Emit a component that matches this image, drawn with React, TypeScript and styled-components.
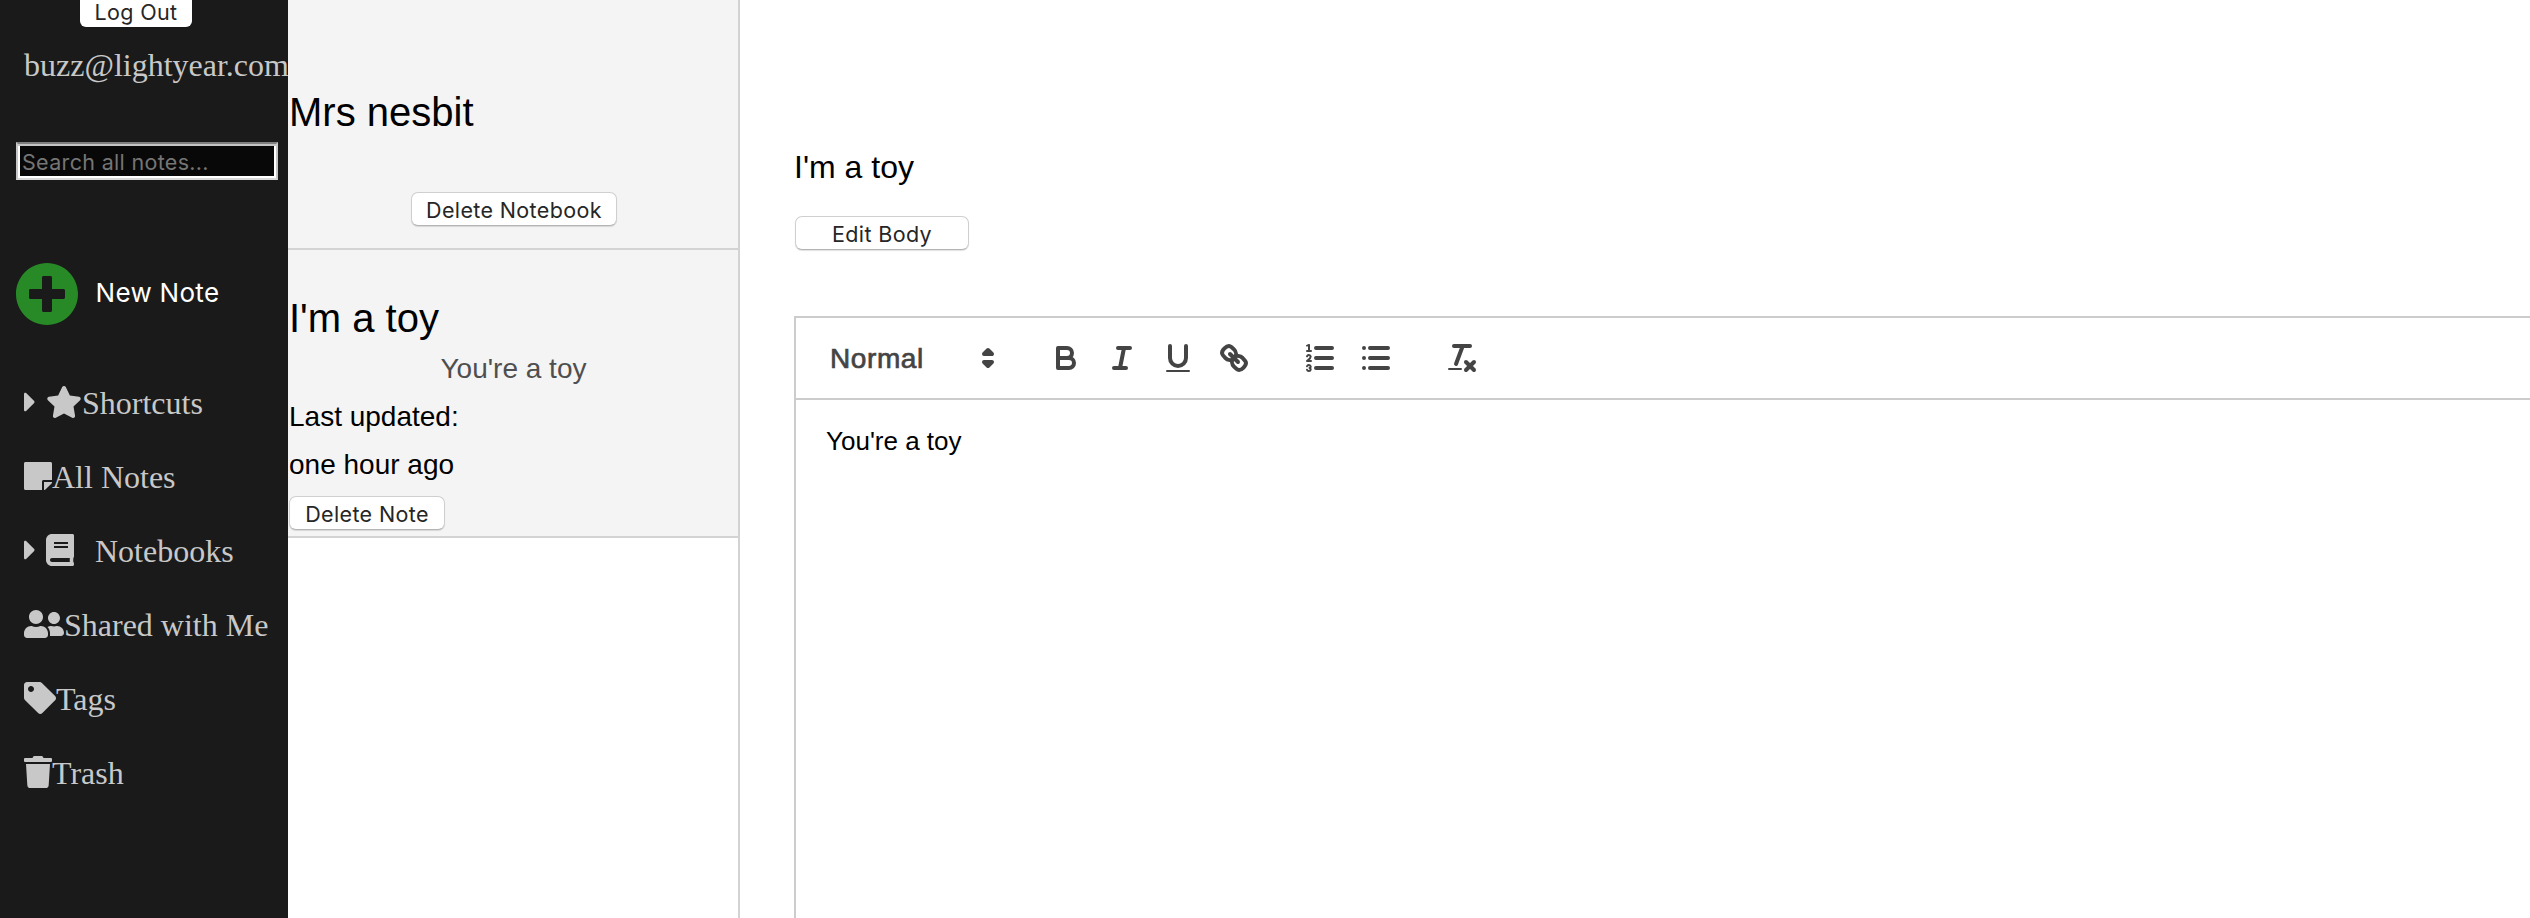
import React from 'react';
import styled, { createGlobalStyle } from 'styled-components';
import {
  FaBook,
  FaCaretRight,
  FaPlusCircle,
  FaStar,
  FaStickyNote,
  FaTag,
  FaTrash,
  FaUserFriends,
} from 'react-icons/fa';

const sans = "'Liberation Sans', Arial, Helvetica, sans-serif";
const serif = "'Liberation Serif', 'Times New Roman', serif";
const system = "Inter, 'Liberation Sans', sans-serif";

const GlobalStyle = createGlobalStyle`
  *, *::before, *::after { box-sizing: border-box; }
  body { margin: 0; background: #fff; overflow: hidden; }
  h1, h2, p { margin: 0; font-weight: 400; }
`;

const Page = styled.div`
  display: flex;
  width: 100%;
  height: 100vh;
  overflow: hidden;
  font-family: ${sans};
  color: #000;
`;

const Sidebar = styled.aside`
  display: flex;
  flex-direction: column;
  flex: 0 0 288px;
  overflow: hidden;
  background: #1a1a1a;
  color: #c8c8c8;
  font: 32px/37px ${serif};
`;

const Button = styled.button<{ $width: number }>`
  width: ${({ $width }) => $width}px;
  height: 34px;
  flex-shrink: 0;
  padding: 2px 0 0;
  border: 1px solid #cfcfcf;
  border-bottom-color: #b4b4b4;
  border-radius: 7px;
  background: #fff;
  box-shadow: 0 1px 1px rgba(0, 0, 0, 0.12);
  color: #262626;
  font: 21.5px/30px ${system};
  letter-spacing: 0.36px;
  white-space: nowrap;
`;

const LogOut = styled(Button)`
  height: 27px;
  margin-left: 80px;
  padding: 0 0 2px;
  border: 0;
  border-radius: 0 0 6px 6px;
  line-height: 23px;
`;

const Email = styled.p`
  margin: 20px 0 0 24px;
  height: 37px;
  white-space: nowrap;
`;

const Search = styled.input`
  width: 262px;
  height: 38px;
  margin: 58px 0 0 16px;
  padding: 2px 4px 0;
  border: 2px solid #c6c6c6;
  border-top-color: #7f7f7f;
  border-bottom-color: #d8d8d8;
  border-radius: 0;
  outline: 0;
  background: #080808;
  box-shadow: inset 0 2px 0 #c4c4c4, inset 0 0 0 2px #fff;
  color: #fff;
  font: 21.5px/30px ${system};
  letter-spacing: 0.32px;
  &::placeholder { color: #757575; opacity: 1; }
`;

const NewNote = styled.div`
  display: flex;
  align-items: center;
  height: 64px;
  margin: 82px 0 59px 15px;
  color: #fff;
  font: 26px/32px ${system};
  letter-spacing: 0.3px;
  svg { color: #278a27; margin-right: 16.5px; }
`;

const NewNoteLabel = styled.span`
  padding-bottom: 2px;
`;

const NavRow = styled.div`
  display: flex;
  align-items: flex-start;
  height: 32px;
  margin: 0 0 42px 24px;
  white-space: nowrap;
`;

const NavIcon = styled.span<{ $width: number; $gap?: number }>`
  display: flex;
  flex: none;
  width: ${({ $width }) => $width}px;
  height: 32px;
  margin: 1px ${({ $gap = 0 }) => $gap}px 0 0;
  svg { width: 100%; height: 100%; }
`;

const ListColumn = styled.section`
  flex: 0 0 452px;
  border-right: 2px solid #d3d3d3;
`;

const NotebookHeader = styled.header`
  display: flex;
  flex-direction: column;
  height: 250px;
  padding-top: 89px;
  background: #f4f4f4;
  border-bottom: 2px solid #d3d3d3;
  ${Button} { margin: 57px 0 0 123px; }
`;

const Heading = styled.h2`
  padding-left: 1px;
  font-size: 40px;
  line-height: 46px;
`;

const NoteCard = styled.article`
  height: 288px;
  padding-top: 45px;
  background: #f4f4f4;
  border-bottom: 2px solid #d3d3d3;
  font-size: 28px;
  line-height: 48px;
  ${Button} { display: block; margin: 7px 0 0 1px; }
`;

const Preview = styled.p`
  height: 52px;
  padding-left: 1px;
  line-height: 56px;
  text-align: center;
  color: #4f4f4f;
`;

const Updated = styled.p`
  padding-left: 1px;
`;

const Editor = styled.main`
  display: flex;
  flex-direction: column;
  flex: 1;
  min-width: 0;
  padding: 149px 0 0 54px;
`;

const Title = styled.h1`
  margin-bottom: 30px;
  font-size: 32px;
  line-height: 37px;
`;

const EditButton = styled(Button)`
  margin-left: 1px;
`;

const Toolbar = styled.div`
  display: flex;
  align-items: center;
  height: 84px;
  margin-top: 66px;
  padding: 0 16px;
  border: 2px solid #ccc;
  border-right: 0;
`;

const Group = styled.div`
  display: flex;
  margin-right: 30px;
`;

const Tool = styled.button`
  display: flex;
  width: 56px;
  height: 48px;
  padding: 6px 10px;
  border: 0;
  background: none;
`;

const Picker = styled.div`
  display: flex;
  align-items: center;
  justify-content: space-between;
  width: 196px;
  height: 48px;
  padding: 0 2px 0 18px;
  color: #444;
  font-size: 28px;
  letter-spacing: 0.6px;
  -webkit-text-stroke: 0.7px #444;
`;

const PickerLabel = styled.span`
  padding-top: 1px;
`;

const Body = styled.div`
  flex: 1;
  padding: 23px 30px;
  border-left: 2px solid #ccc;
  font-size: 26px;
  line-height: 37px;
`;

const Glyph = styled.svg`
  width: 36px;
  height: 36px;
  fill: none;
  stroke: #444;
  stroke-width: 2;
  stroke-linecap: round;
  stroke-linejoin: round;
  .fill { fill: #444; stroke: none; }
  .solid { fill: #444; }
  .thin { stroke-width: 1; }
`;

const Icon = ({ children }: { children: React.ReactNode }) => (
  <Glyph viewBox="0 0 18 18" aria-hidden="true">{children}</Glyph>
);

const BoldIcon = () => (
  <Icon>
    <path d="M5,4H9.5A2.5,2.5,0,0,1,12,6.5v0A2.5,2.5,0,0,1,9.5,9H5V4Z" />
    <path d="M5,9h5.5A2.5,2.5,0,0,1,13,11.5v0A2.5,2.5,0,0,1,10.5,14H5V9Z" />
  </Icon>
);

const ItalicIcon = () => (
  <Icon>
    <line x1="7" x2="13" y1="4" y2="4" />
    <line x1="5" x2="11" y1="14" y2="14" />
    <line x1="8" x2="10" y1="14" y2="4" />
  </Icon>
);

const UnderlineIcon = () => (
  <Icon>
    <path d="M5,3V9a4.012,4.012,0,0,0,4,4H9a4.012,4.012,0,0,0,4-4V3" />
    <rect className="fill" height="1" rx="0.5" width="12" x="3" y="15" />
  </Icon>
);

const LinkIcon = () => (
  <Icon>
    <line x1="7" x2="11" y1="7" y2="11" />
    <path d="M8.9,4.577a3.476,3.476,0,0,1,.36,4.679A3.476,3.476,0,0,1,4.577,8.9C3.185,7.5,2.035,6.4,4.217,4.217S7.5,3.185,8.9,4.577Z" />
    <path d="M13.423,9.1a3.476,3.476,0,0,0-4.679-.36,3.476,3.476,0,0,0,.36,4.679c1.392,1.392,2.5,2.542,4.679.36S14.815,10.5,13.423,9.1Z" />
  </Icon>
);

const OrderedIcon = () => (
  <Icon>
    <path d="M7,4H15M7,9H15M7,14H15" />
    <line className="thin" x1="2.5" x2="4.5" y1="5.5" y2="5.5" />
    <path className="fill" d="M3.5,6A0.5,0.5,0,0,1,3,5.5V3.085l-0.276.138A0.5,0.5,0,0,1,2.053,3c-0.124-.247-0.023-0.324.224-0.447l1-.5A0.5,0.5,0,0,1,4,2.5v3A0.5,0.5,0,0,1,3.5,6Z" />
    <path className="thin" d="M4.5,10.5h-2c0-.234,1.85-1.076,1.85-2.234A0.959,0.959,0,0,0,2.5,8.156" />
    <path className="thin" d="M2.5,14.846a0.959,0.959,0,0,0,1.85-.109A0.7,0.7,0,0,0,3.75,14a0.688,0.688,0,0,0,.6-0.736,0.959,0.959,0,0,0-1.85-.109" />
  </Icon>
);

const BulletIcon = () => (
  <Icon>
    <path d="M6,4H15M6,9H15M6,14H15" />
    <path d="M3,4h0.001M3,9h0.001M3,14h0.001" />
  </Icon>
);

const CleanIcon = () => (
  <Icon>
    <line x1="5" x2="13" y1="3" y2="3" />
    <line x1="6" x2="9.35" y1="12" y2="3" />
    <line x1="11" x2="15" y1="11" y2="15" />
    <line x1="15" x2="11" y1="11" y2="15" />
    <rect className="fill" height="1" rx="0.5" width="7" x="2" y="14" />
  </Icon>
);

const PickerIcon = () => (
  <Icon>
    <polygon className="solid" points="7 11 9 13 11 11 7 11" />
    <polygon className="solid" points="7 7 9 5 11 7 7 7" />
  </Icon>
);

const navItems = [
  { label: 'Shortcuts', Art: FaStar, width: 36, expandable: true },
  { label: 'All Notes', Art: FaStickyNote, width: 28 },
  { label: 'Notebooks', Art: FaBook, width: 28, expandable: true, gap: 21 },
  { label: 'Shared with Me', Art: FaUserFriends, width: 40 },
  { label: 'Tags', Art: FaTag, width: 32 },
  { label: 'Trash', Art: FaTrash, width: 28 },
];

const toolGroups = [
  [
    { name: 'Bold', Art: BoldIcon },
    { name: 'Italic', Art: ItalicIcon },
    { name: 'Underline', Art: UnderlineIcon },
    { name: 'Link', Art: LinkIcon },
  ],
  [
    { name: 'Ordered list', Art: OrderedIcon },
    { name: 'Bullet list', Art: BulletIcon },
  ],
  [{ name: 'Clear formatting', Art: CleanIcon }],
];

export default function App() {
  return (
    <>
      <GlobalStyle />
      <Page>
        <Sidebar>
          <LogOut $width={112}>Log Out</LogOut>
          <Email>buzz@lightyear.com</Email>
          <Search placeholder="Search all notes..." />
          <NewNote>
            <FaPlusCircle size={64} />
            <NewNoteLabel>New Note</NewNoteLabel>
          </NewNote>
          <nav>
            {navItems.map(({ label, Art, width, expandable, gap }) => (
              <NavRow key={label}>
                {expandable && (
                  <NavIcon $width={12} $gap={10}><FaCaretRight /></NavIcon>
                )}
                <NavIcon $width={width} $gap={gap}><Art /></NavIcon>
                {label}
              </NavRow>
            ))}
          </nav>
        </Sidebar>
        <ListColumn>
          <NotebookHeader>
            <Heading>Mrs nesbit</Heading>
            <Button $width={206}>Delete Notebook</Button>
          </NotebookHeader>
          <NoteCard>
            <Heading>I'm a toy</Heading>
            <Preview>You're a toy</Preview>
            <Updated>Last updated:</Updated>
            <Updated>one hour ago</Updated>
            <Button $width={156}>Delete Note</Button>
          </NoteCard>
        </ListColumn>
        <Editor>
          <Title>I'm a toy</Title>
          <EditButton $width={174}>Edit Body</EditButton>
          <Toolbar>
            <Group>
              <Picker><PickerLabel>Normal</PickerLabel><PickerIcon /></Picker>
            </Group>
            {toolGroups.map((group) => (
              <Group key={group[0].name}>
                {group.map(({ name, Art }) => (
                  <Tool key={name} aria-label={name}><Art /></Tool>
                ))}
              </Group>
            ))}
          </Toolbar>
          <Body>You're a toy</Body>
        </Editor>
      </Page>
    </>
  );
}
